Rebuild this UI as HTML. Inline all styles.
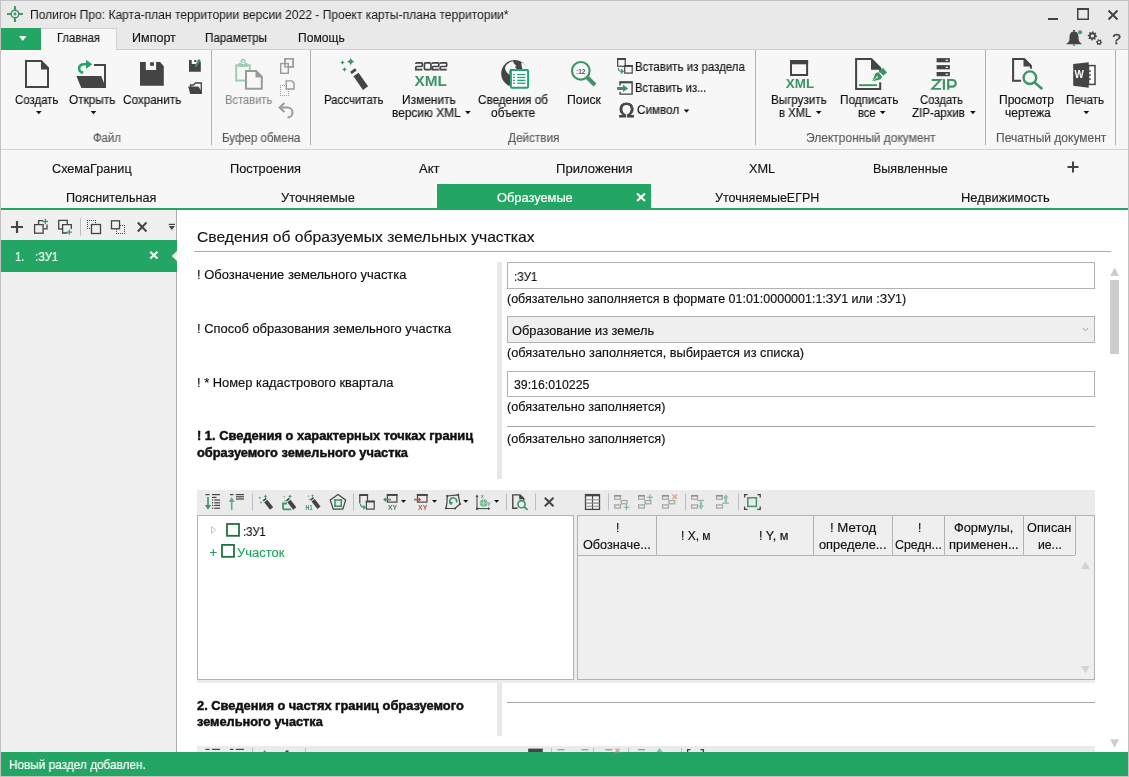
<!DOCTYPE html>
<html><head><meta charset="utf-8"><title>Полигон Про</title>
<style>
html,body{margin:0;padding:0;width:1129px;height:777px;overflow:hidden;background:#fff;}
body{position:relative;font-family:"Liberation Sans",sans-serif;}
.t{position:absolute;white-space:nowrap;transform-origin:0 0;will-change:transform;font-family:"Liberation Sans",sans-serif;}
svg{position:absolute;overflow:visible;}
</style></head><body>
<div style="position:absolute;left:0px;top:0px;width:1129px;height:777px;background:#ffffff;"></div>
<div style="position:absolute;left:0px;top:0px;width:1129px;height:50px;background:#e9e9e9;"></div>
<div style="position:absolute;left:0px;top:50px;width:1129px;height:100px;background:#f7f7f7;"></div>
<div style="position:absolute;left:0px;top:149px;width:1129px;height:1px;background:#d4d4d4;"></div>
<div style="position:absolute;left:0px;top:150px;width:1129px;height:58px;background:#f7f7f7;"></div>
<div style="position:absolute;left:0px;top:208px;width:1129px;height:2px;background:#23a564;"></div>
<div style="position:absolute;left:1px;top:28px;width:40px;height:22px;background:#23a564;"></div>
<div style="position:absolute;left:41px;top:28px;width:76px;height:22px;background:#f7f7f7;border-top:1px solid #d0d0d0;border-right:1px solid #d0d0d0;box-sizing:border-box;"></div>
<div style="position:absolute;left:117px;top:49px;width:1012px;height:1px;background:#d0d0d0;"></div>
<div style="position:absolute;left:1px;top:210px;width:175px;height:542px;background:#f0f0f0;"></div>
<div style="position:absolute;left:176px;top:210px;width:1px;height:542px;background:#abadb5;"></div>
<div style="position:absolute;left:1px;top:240px;width:176px;height:32px;background:#23a564;"></div>
<div style="position:absolute;left:194px;top:251px;width:917px;height:1px;background:#a9abb3;"></div>
<div style="position:absolute;left:497px;top:262px;width:5px;height:217px;background:#e8e8e8;"></div>
<div style="position:absolute;left:507px;top:262px;width:588px;height:27px;background:#fff;border:1px solid #b1b1b9;box-sizing:border-box;"></div>
<div style="position:absolute;left:507px;top:316px;width:588px;height:27px;background:#efefef;border:1px solid #b1b1b9;box-sizing:border-box;"></div>
<div style="position:absolute;left:507px;top:371px;width:588px;height:26px;background:#fff;border:1px solid #b1b1b9;box-sizing:border-box;"></div>
<div style="position:absolute;left:507px;top:426px;width:588px;height:1px;background:#a5a5a5;"></div>
<div style="position:absolute;left:197px;top:490px;width:898px;height:193px;background:#ebebeb;"></div>
<div style="position:absolute;left:197px;top:515px;width:377px;height:165px;background:#fff;border:1px solid #b1b1b9;box-sizing:border-box;"></div>
<div style="position:absolute;left:577px;top:515px;width:518px;height:165px;background:#efefef;border:1px solid #b1b1b9;box-sizing:border-box;"></div>
<div style="position:absolute;left:578px;top:555px;width:497px;height:1px;background:#b1b1b9;"></div>
<div style="position:absolute;left:656px;top:516px;width:1px;height:39px;background:#b1b1b9;"></div>
<div style="position:absolute;left:813px;top:516px;width:1px;height:39px;background:#b1b1b9;"></div>
<div style="position:absolute;left:892px;top:516px;width:1px;height:39px;background:#b1b1b9;"></div>
<div style="position:absolute;left:944px;top:516px;width:1px;height:39px;background:#b1b1b9;"></div>
<div style="position:absolute;left:1023px;top:516px;width:1px;height:39px;background:#b1b1b9;"></div>
<div style="position:absolute;left:1075px;top:516px;width:1px;height:39px;background:#b1b1b9;"></div>
<div style="position:absolute;left:497px;top:683px;width:5px;height:53px;background:#e8e8e8;"></div>
<div style="position:absolute;left:507px;top:702px;width:588px;height:1px;background:#a5a5a5;"></div>
<div style="position:absolute;left:197px;top:746px;width:898px;height:6px;background:#ebebeb;"></div>
<div style="position:absolute;left:0px;top:752px;width:1129px;height:25px;background:#23a564;"></div>
<div style="position:absolute;left:437px;top:184px;width:214px;height:24px;background:#23a564;"></div>
<div style="position:absolute;left:0;top:0;width:1129px;height:777px;box-sizing:border-box;border:1px solid #c2c2c2;"></div>
<span class="t" style="left:29.50px;top:9px;font-size:12.5px;line-height:12.5px;color:#141414;-webkit-text-stroke:0.15px currentColor;transform:scaleX(0.9635);-webkit-text-stroke:0;">Полигон Про: Карта-план территории версии 2022 - Проект карты-плана территории*</span>
<span class="t" style="left:57.10px;top:32px;font-size:12px;line-height:12px;color:#141414;-webkit-text-stroke:0.15px currentColor;transform:scaleX(0.9403);">Главная</span>
<span class="t" style="left:131.60px;top:32px;font-size:12px;line-height:12px;color:#141414;-webkit-text-stroke:0.15px currentColor;transform:scaleX(1.0452);">Импорт</span>
<span class="t" style="left:205.30px;top:32px;font-size:12px;line-height:12px;color:#141414;-webkit-text-stroke:0.15px currentColor;transform:scaleX(0.9688);">Параметры</span>
<span class="t" style="left:298.00px;top:32px;font-size:12px;line-height:12px;color:#141414;-webkit-text-stroke:0.15px currentColor;transform:scaleX(1.0070);">Помощь</span>
<span class="t" style="left:15.40px;top:94px;font-size:12px;line-height:12px;color:#111111;-webkit-text-stroke:0.15px currentColor;transform:scaleX(0.9512);">Создать</span>
<span class="t" style="left:68.50px;top:94px;font-size:12px;line-height:12px;color:#111111;-webkit-text-stroke:0.15px currentColor;transform:scaleX(0.9825);">Открыть</span>
<span class="t" style="left:122.60px;top:94px;font-size:12px;line-height:12px;color:#111111;-webkit-text-stroke:0.15px currentColor;transform:scaleX(0.9744);">Сохранить</span>
<span class="t" style="left:324.00px;top:94px;font-size:12px;line-height:12px;color:#111111;-webkit-text-stroke:0.15px currentColor;transform:scaleX(0.9517);">Рассчитать</span>
<span class="t" style="left:402.20px;top:94px;font-size:12px;line-height:12px;color:#111111;-webkit-text-stroke:0.15px currentColor;transform:scaleX(0.9903);">Изменить</span>
<span class="t" style="left:392.30px;top:107px;font-size:12px;line-height:12px;color:#111111;-webkit-text-stroke:0.15px currentColor;transform:scaleX(0.9892);">версию XML</span>
<span class="t" style="left:477.70px;top:94px;font-size:12px;line-height:12px;color:#111111;-webkit-text-stroke:0.15px currentColor;transform:scaleX(0.9756);">Сведения об</span>
<span class="t" style="left:491.00px;top:107px;font-size:12px;line-height:12px;color:#111111;-webkit-text-stroke:0.15px currentColor;transform:scaleX(0.9877);">объекте</span>
<span class="t" style="left:567.00px;top:94px;font-size:12px;line-height:12px;color:#111111;-webkit-text-stroke:0.15px currentColor;transform:scaleX(1.0217);">Поиск</span>
<span class="t" style="left:634.70px;top:61px;font-size:12px;line-height:12px;color:#111111;-webkit-text-stroke:0.15px currentColor;transform:scaleX(0.9536);">Вставить из раздела</span>
<span class="t" style="left:634.70px;top:82px;font-size:12px;line-height:12px;color:#111111;-webkit-text-stroke:0.15px currentColor;transform:scaleX(0.9336);">Вставить из...</span>
<span class="t" style="left:637.10px;top:104px;font-size:12px;line-height:12px;color:#111111;-webkit-text-stroke:0.15px currentColor;transform:scaleX(0.9780);">Символ</span>
<span class="t" style="left:770.80px;top:94px;font-size:12px;line-height:12px;color:#111111;-webkit-text-stroke:0.15px currentColor;transform:scaleX(0.9687);">Выгрузить</span>
<span class="t" style="left:779.30px;top:107px;font-size:12px;line-height:12px;color:#111111;-webkit-text-stroke:0.15px currentColor;transform:scaleX(0.9396);">в XML</span>
<span class="t" style="left:839.90px;top:94px;font-size:12px;line-height:12px;color:#111111;-webkit-text-stroke:0.15px currentColor;transform:scaleX(0.9802);">Подписать</span>
<span class="t" style="left:857.90px;top:107px;font-size:12px;line-height:12px;color:#111111;-webkit-text-stroke:0.15px currentColor;transform:scaleX(0.9272);">все</span>
<span class="t" style="left:920.00px;top:94px;font-size:12px;line-height:12px;color:#111111;-webkit-text-stroke:0.15px currentColor;transform:scaleX(0.9425);">Создать</span>
<span class="t" style="left:912.20px;top:107px;font-size:12px;line-height:12px;color:#111111;-webkit-text-stroke:0.15px currentColor;transform:scaleX(0.9618);">ZIP-архив</span>
<span class="t" style="left:999.00px;top:94px;font-size:12px;line-height:12px;color:#111111;-webkit-text-stroke:0.15px currentColor;transform:scaleX(1.0046);">Просмотр</span>
<span class="t" style="left:1005.10px;top:107px;font-size:12px;line-height:12px;color:#111111;-webkit-text-stroke:0.15px currentColor;transform:scaleX(0.9957);">чертежа</span>
<span class="t" style="left:1066.30px;top:94px;font-size:12px;line-height:12px;color:#111111;-webkit-text-stroke:0.15px currentColor;transform:scaleX(0.9682);">Печать</span>
<span class="t" style="left:225.10px;top:94px;font-size:12px;line-height:12px;color:#8a8a8a;-webkit-text-stroke:0.15px currentColor;transform:scaleX(0.9297);">Вставить</span>
<span class="t" style="left:92.60px;top:132px;font-size:12px;line-height:12px;color:#5a5a5a;-webkit-text-stroke:0.15px currentColor;transform:scaleX(0.9458);">Файл</span>
<span class="t" style="left:222.00px;top:132px;font-size:12px;line-height:12px;color:#5a5a5a;-webkit-text-stroke:0.15px currentColor;transform:scaleX(0.9617);">Буфер обмена</span>
<span class="t" style="left:507.50px;top:132px;font-size:12px;line-height:12px;color:#5a5a5a;-webkit-text-stroke:0.15px currentColor;transform:scaleX(0.9786);">Действия</span>
<span class="t" style="left:805.50px;top:132px;font-size:12px;line-height:12px;color:#5a5a5a;-webkit-text-stroke:0.15px currentColor;transform:scaleX(0.9962);">Электронный документ</span>
<span class="t" style="left:996.10px;top:132px;font-size:12px;line-height:12px;color:#5a5a5a;-webkit-text-stroke:0.15px currentColor;">Печатный документ</span>
<span class="t" style="left:52.00px;top:163px;font-size:12.5px;line-height:12.5px;color:#141414;-webkit-text-stroke:0.15px currentColor;transform:scaleX(1.0124);">СхемаГраниц</span>
<span class="t" style="left:230.10px;top:163px;font-size:12.5px;line-height:12.5px;color:#141414;-webkit-text-stroke:0.15px currentColor;transform:scaleX(1.0220);">Построения</span>
<span class="t" style="left:418.50px;top:163px;font-size:12.5px;line-height:12.5px;color:#141414;-webkit-text-stroke:0.15px currentColor;transform:scaleX(1.0446);">Акт</span>
<span class="t" style="left:555.80px;top:163px;font-size:12.5px;line-height:12.5px;color:#141414;-webkit-text-stroke:0.15px currentColor;transform:scaleX(1.0462);">Приложения</span>
<span class="t" style="left:749.30px;top:163px;font-size:12.5px;line-height:12.5px;color:#141414;-webkit-text-stroke:0.15px currentColor;transform:scaleX(1.0175);">XML</span>
<span class="t" style="left:873.00px;top:163px;font-size:12.5px;line-height:12.5px;color:#141414;-webkit-text-stroke:0.15px currentColor;transform:scaleX(1.0030);">Выявленные</span>
<span class="t" style="left:66.10px;top:192px;font-size:12.5px;line-height:12.5px;color:#141414;-webkit-text-stroke:0.15px currentColor;transform:scaleX(1.0103);">Пояснительная</span>
<span class="t" style="left:280.80px;top:192px;font-size:12.5px;line-height:12.5px;color:#141414;-webkit-text-stroke:0.15px currentColor;transform:scaleX(1.0282);">Уточняемые</span>
<span class="t" style="left:715.40px;top:192px;font-size:12.5px;line-height:12.5px;color:#141414;-webkit-text-stroke:0.15px currentColor;">УточняемыеЕГРН</span>
<span class="t" style="left:960.90px;top:192px;font-size:12.5px;line-height:12.5px;color:#141414;-webkit-text-stroke:0.15px currentColor;transform:scaleX(1.0314);">Недвижимость</span>
<span class="t" style="left:496.80px;top:192px;font-size:12.5px;line-height:12.5px;color:#ffffff;-webkit-text-stroke:0.15px currentColor;transform:scaleX(1.0261);-webkit-text-stroke:0.2px #fff;">Образуемые</span>
<span class="t" style="left:15.30px;top:251px;font-size:12.5px;line-height:12.5px;color:#ffffff;-webkit-text-stroke:0.15px currentColor;transform:scaleX(0.8675);-webkit-text-stroke:0.2px #fff;">1.</span>
<span class="t" style="left:34.60px;top:251px;font-size:12.5px;line-height:12.5px;color:#ffffff;-webkit-text-stroke:0.15px currentColor;transform:scaleX(0.8971);-webkit-text-stroke:0.2px #fff;">:ЗУ1</span>
<span class="t" style="left:196.90px;top:229px;font-size:15px;line-height:15px;color:#141414;-webkit-text-stroke:0.15px currentColor;transform:scaleX(1.0429);">Сведения об образуемых земельных участках</span>
<span class="t" style="left:197.20px;top:269px;font-size:12px;line-height:12px;color:#111111;-webkit-text-stroke:0.15px currentColor;transform:scaleX(1.0792);">! Обозначение земельного участка</span>
<span class="t" style="left:197.20px;top:323px;font-size:12px;line-height:12px;color:#111111;-webkit-text-stroke:0.15px currentColor;transform:scaleX(1.0758);">! Способ образования земельного участка</span>
<span class="t" style="left:197.20px;top:377px;font-size:12px;line-height:12px;color:#111111;-webkit-text-stroke:0.15px currentColor;transform:scaleX(1.0738);">! * Номер кадастрового квартала</span>
<span class="t" style="left:197.20px;top:430px;font-size:12px;line-height:12px;color:#111;font-weight:bold;-webkit-text-stroke:0.45px currentColor;transform:scaleX(1.0733);">! 1. Сведения о характерных точках границ</span>
<span class="t" style="left:197.20px;top:447px;font-size:12px;line-height:12px;color:#111;font-weight:bold;-webkit-text-stroke:0.45px currentColor;transform:scaleX(1.0675);">образуемого земельного участка</span>
<span class="t" style="left:513.60px;top:271px;font-size:12px;line-height:12px;color:#111111;-webkit-text-stroke:0.15px currentColor;transform:scaleX(0.9374);">:ЗУ1</span>
<span class="t" style="left:506.80px;top:293px;font-size:12px;line-height:12px;color:#111111;-webkit-text-stroke:0.15px currentColor;transform:scaleX(1.0409);">(обязательно заполняется в формате 01:01:0000001:1:ЗУ1 или :ЗУ1)</span>
<span class="t" style="left:511.80px;top:325px;font-size:12px;line-height:12px;color:#111111;-webkit-text-stroke:0.15px currentColor;transform:scaleX(1.0682);">Образование из земель</span>
<span class="t" style="left:507.10px;top:347px;font-size:12px;line-height:12px;color:#111111;-webkit-text-stroke:0.15px currentColor;transform:scaleX(1.0626);">(обязательно заполняется, выбирается из списка)</span>
<span class="t" style="left:513.90px;top:379px;font-size:12px;line-height:12px;color:#111111;-webkit-text-stroke:0.15px currentColor;transform:scaleX(1.0262);">39:16:010225</span>
<span class="t" style="left:507.10px;top:401px;font-size:12px;line-height:12px;color:#111111;-webkit-text-stroke:0.15px currentColor;transform:scaleX(1.0518);">(обязательно заполняется)</span>
<span class="t" style="left:507.10px;top:433px;font-size:12px;line-height:12px;color:#111111;-webkit-text-stroke:0.15px currentColor;transform:scaleX(1.0518);">(обязательно заполняется)</span>
<span class="t" style="left:615.70px;top:522px;font-size:12px;line-height:12px;color:#111111;-webkit-text-stroke:0.15px currentColor;">!</span>
<span class="t" style="left:582.70px;top:539px;font-size:12px;line-height:12px;color:#111111;-webkit-text-stroke:0.15px currentColor;transform:scaleX(1.0553);">Обозначе...</span>
<span class="t" style="left:681.10px;top:530px;font-size:12px;line-height:12px;color:#111111;-webkit-text-stroke:0.15px currentColor;transform:scaleX(0.9958);">! X, м</span>
<span class="t" style="left:758.90px;top:530px;font-size:12px;line-height:12px;color:#111111;-webkit-text-stroke:0.15px currentColor;transform:scaleX(1.0583);">! Y, м</span>
<span class="t" style="left:829.50px;top:522px;font-size:12px;line-height:12px;color:#111111;-webkit-text-stroke:0.15px currentColor;transform:scaleX(1.1057);">! Метод</span>
<span class="t" style="left:819.10px;top:539px;font-size:12px;line-height:12px;color:#111111;-webkit-text-stroke:0.15px currentColor;transform:scaleX(1.0672);">определе...</span>
<span class="t" style="left:917.50px;top:522px;font-size:12px;line-height:12px;color:#111111;-webkit-text-stroke:0.15px currentColor;">!</span>
<span class="t" style="left:894.50px;top:539px;font-size:12px;line-height:12px;color:#111111;-webkit-text-stroke:0.15px currentColor;transform:scaleX(1.0336);">Средн...</span>
<span class="t" style="left:954.20px;top:522px;font-size:12px;line-height:12px;color:#111111;-webkit-text-stroke:0.15px currentColor;transform:scaleX(1.0667);">Формулы,</span>
<span class="t" style="left:948.90px;top:539px;font-size:12px;line-height:12px;color:#111111;-webkit-text-stroke:0.15px currentColor;transform:scaleX(1.0764);">применен...</span>
<span class="t" style="left:1026.80px;top:522px;font-size:12px;line-height:12px;color:#111111;-webkit-text-stroke:0.15px currentColor;transform:scaleX(1.0603);">Описан</span>
<span class="t" style="left:1037.50px;top:539px;font-size:12px;line-height:12px;color:#111111;-webkit-text-stroke:0.15px currentColor;transform:scaleX(1.0182);">ие...</span>
<span class="t" style="left:242.90px;top:526px;font-size:12px;line-height:12px;color:#111111;-webkit-text-stroke:0.15px currentColor;transform:scaleX(0.9131);">:ЗУ1</span>
<span class="t" style="left:237.40px;top:547px;font-size:12px;line-height:12px;color:#26a562;-webkit-text-stroke:0.15px currentColor;transform:scaleX(1.0795);">Участок</span>
<span class="t" style="left:196.70px;top:700px;font-size:12px;line-height:12px;color:#111;font-weight:bold;-webkit-text-stroke:0.45px currentColor;transform:scaleX(1.0705);">2. Сведения о частях границ образуемого</span>
<span class="t" style="left:196.70px;top:716px;font-size:12px;line-height:12px;color:#111;font-weight:bold;-webkit-text-stroke:0.45px currentColor;transform:scaleX(1.0613);">земельного участка</span>
<span class="t" style="left:8.80px;top:759px;font-size:12.5px;line-height:12.5px;color:#ffffff;-webkit-text-stroke:0.15px currentColor;transform:scaleX(0.9443);-webkit-text-stroke:0.2px #fff;">Новый раздел добавлен.</span>
<svg width="1129" height="777" viewBox="0 0 1129 777" style="left:0;top:0;"><g fill="none" stroke="#3d9466" stroke-width="1.4"><circle cx="15" cy="14" r="3.8"/></g><g fill="#3d9466"><rect x="14.05" y="6" width="1.9" height="4.4"/><rect x="14.05" y="17.6" width="1.9" height="4.4"/><rect x="7" y="13.05" width="4.4" height="1.9"/><rect x="18.6" y="13.05" width="4.4" height="1.9"/><circle cx="15" cy="14" r="1.4"/></g><rect x="1048" y="18" width="10" height="2" fill="#444444"/><rect x="1077.75" y="8.75" width="10.5" height="10.5" fill="none" stroke="#444444" stroke-width="1.5"/><rect x="1077" y="8" width="12" height="2" fill="#444444"/><path d="M1108.5,10.5 L1117.5,19.5 M1117.5,10.5 L1108.5,19.5" stroke="#444444" stroke-width="2"/><path d="M1074,31.5 C1070,31.5 1069.5,35 1069.5,38.5 C1069.5,41 1068.5,42.5 1066.6,43.6 L1066.6,44.3 H1081.6 L1081.6,43.6 C1079.7,42.5 1078.6,41 1078.6,38.5 C1078.6,35 1078,31.5 1074,31.5Z" fill="#444444"/><rect x="1073.2" y="44.6" width="1.8" height="1.1" fill="#444444"/><rect x="1073" y="30" width="2" height="1.6" fill="#444444"/><circle cx="1080" cy="32.3" r="2.1" fill="#3fa374"/><polygon points="1097.10,35.90 1097.01,36.82 1095.53,37.20 1095.21,37.78 1095.72,39.22 1095.01,39.81 1093.70,39.03 1093.06,39.22 1092.40,40.60 1091.48,40.51 1091.10,39.03 1090.52,38.71 1089.08,39.22 1088.49,38.51 1089.27,37.20 1089.08,36.56 1087.70,35.90 1087.79,34.98 1089.27,34.60 1089.59,34.02 1089.08,32.58 1089.79,31.99 1091.10,32.77 1091.74,32.58 1092.40,31.20 1093.32,31.29 1093.70,32.77 1094.28,33.09 1095.72,32.58 1096.31,33.29 1095.53,34.60 1095.72,35.24" fill="#444444"/><circle cx="1092.4" cy="35.9" r="1.69" fill="#e9e9e9"/><polygon points="1102.20,42.20 1102.09,43.00 1101.03,43.32 1100.68,43.78 1100.65,44.88 1099.90,45.19 1099.10,44.43 1098.52,44.36 1097.55,44.88 1096.91,44.39 1097.17,43.32 1096.94,42.78 1096.00,42.20 1096.11,41.40 1097.17,41.08 1097.52,40.62 1097.55,39.52 1098.30,39.21 1099.10,39.97 1099.68,40.04 1100.65,39.52 1101.29,40.01 1101.03,41.08 1101.26,41.62" fill="#444444"/><circle cx="1099.1" cy="42.2" r="1.12" fill="#e9e9e9"/><text x="1112.2" y="43.9" font-family="Liberation Sans" font-size="15.5" fill="#444444" stroke="#444444" stroke-width="0.4">?</text><path d="M19,36 H26.5 L22.75,41Z" fill="#fff"/><path fill-rule="evenodd" fill="#444444" d="M25,60 H41.5 L49,67.5 V88 H25Z M27,62 H41 V69.5 H47 V86 H27Z"/><path d="M36.0,111 H41.599999999999994 L38.8,114.3Z" fill="#111"/><path fill="#444444" d="M94,64 H106 V88 H81.3 L76.4,76 H101.2 L104,83 V66 H94Z"/><path d="M83.2,72.8 C77.5,71.5 77.8,64.3 84.2,64.3 H87.5" fill="none" stroke="#23a564" stroke-width="2.6"/><path d="M86,59.7 L92.3,64.3 L86,68.9Z" fill="#23a564"/><path d="M90.7,111 H96.3 L93.5,114.3Z" fill="#111"/><path fill="#444444" d="M140,62 H145.8 V70.1 H156.1 V62 H160.1 L163.8,66.2 V85.8 H140Z"/><rect x="150.1" y="62.3" width="3.8" height="3.5" fill="#444444"/><path fill="#444444" d="M189,60 H191.7 V64 H197.6 V60 H199 L200.8,62 V71.8 H189Z"/><rect x="194.3" y="60" width="2" height="2" fill="#444444"/><path d="M199.8,59.5 L195.4,66.6" stroke="#3d9466" stroke-width="2.2"/><path fill="none" stroke="#444444" stroke-width="1.3" d="M190.5,93 V85 H193.5 L195.5,83 H201.3 V93"/><path fill="#444444" d="M188.2,86.5 H198.5 L202,92 V94 H190.3Z"/><path fill="none" stroke="#9fcdb3" stroke-width="2" d="M236.2,65.2 H249.8 V80.6 H236.2Z"/><path fill="#9fcdb3" fill-rule="evenodd" d="M238.5,63 H247.5 V67 H238.5Z M243.1,58.8 A2.6,2.6 0 1 1 243.09,58.8Z"/><circle cx="243.1" cy="61.6" r="1.1" fill="#f7f7f7"/><path fill="#f7f7f7" d="M245,70 H256 L263,77 V89.7 H245Z"/><path fill-rule="evenodd" fill="#9a9a9a" d="M245,70 H256.5 L262.8,76.3 V89.7 H245Z M247,72 H255.5 V77.5 H260.8 V87.7 H247Z"/><rect x="284.9" y="58.7" width="8.2" height="8.2" fill="#f7f7f7" stroke="#9a9a9a" stroke-width="1.4"/><rect x="280.7" y="63.6" width="7.6" height="9.7" fill="#f7f7f7" stroke="#9a9a9a" stroke-width="1.4"/><rect x="284.9" y="58.7" width="8.2" height="8.2" fill="none" stroke="#9a9a9a" stroke-width="1.4"/><g><rect x="280" y="85" width="1" height="1" fill="#9a9a9a"/><rect x="280" y="87" width="1" height="1" fill="#9a9a9a"/><rect x="280" y="89" width="1" height="1" fill="#9a9a9a"/><rect x="280" y="91" width="1" height="1" fill="#9a9a9a"/><rect x="280" y="93" width="1" height="1" fill="#9a9a9a"/><rect x="280" y="95" width="1" height="1" fill="#9a9a9a"/><rect x="282" y="85" width="1" height="1" fill="#9a9a9a"/><rect x="282" y="95" width="1" height="1" fill="#9a9a9a"/><rect x="284" y="85" width="1" height="1" fill="#9a9a9a"/><rect x="284" y="95" width="1" height="1" fill="#9a9a9a"/><rect x="286" y="85" width="1" height="1" fill="#9a9a9a"/><rect x="286" y="95" width="1" height="1" fill="#9a9a9a"/><rect x="288" y="85" width="1" height="1" fill="#9a9a9a"/><rect x="288" y="87" width="1" height="1" fill="#9a9a9a"/><rect x="288" y="89" width="1" height="1" fill="#9a9a9a"/><rect x="288" y="91" width="1" height="1" fill="#9a9a9a"/><rect x="288" y="93" width="1" height="1" fill="#9a9a9a"/><rect x="288" y="95" width="1" height="1" fill="#9a9a9a"/></g><path d="M286.2,80.9 H292 L294,83 V89 H286.2Z" fill="#f7f7f7" stroke="#9a9a9a" stroke-width="1.4"/><path d="M281.5,107.5 H287.5 A5,5 0 0 1 287.5,117.5" fill="none" stroke="#9a9a9a" stroke-width="2"/><path d="M284.5,103 L279.6,107.5 L284.5,112" fill="none" stroke="#9a9a9a" stroke-width="2"/><path d="M350.7,58.1 Q351.312,61.088 354.3,61.7 Q351.312,62.312000000000005 350.7,65.3 Q350.08799999999997,62.312000000000005 347.09999999999997,61.7 Q350.08799999999997,61.088 350.7,58.1Z" fill="#3d9466"/><path d="M342.5,60.2 Q342.891,62.109 344.8,62.5 Q342.891,62.891 342.5,64.8 Q342.109,62.891 340.2,62.5 Q342.109,62.109 342.5,60.2Z" fill="#3d9466"/><path d="M344.5,67.10000000000001 Q344.891,69.009 346.8,69.4 Q344.891,69.79100000000001 344.5,71.7 Q344.109,69.79100000000001 342.2,69.4 Q344.109,69.009 344.5,67.10000000000001Z" fill="#3d9466"/><g transform="translate(360.75,81.3) rotate(55)"><rect x="-8.3" y="-3.1" width="16.6" height="6.2" fill="#444444"/></g><g transform="translate(353.4,71.1) rotate(55)"><rect x="-1.35" y="-3" width="2.7" height="6" fill="#444444"/></g><path d="M415.8,63.9 Q415.8,62.9 416.8,62.9 H421.8 Q422.3,62.9 422.3,63.9 V65.5 Q422.3,66.5 421.3,66.5 H416.8 Q415.8,66.5 415.8,67.5 V69.7 H422.40000000000003" fill="none" stroke="#444444" stroke-width="1.7"/><rect x="424.4" y="62.9" width="6.5" height="6.8" rx="1.2" fill="none" stroke="#444444" stroke-width="1.7"/><path d="M432.3,63.9 Q432.3,62.9 433.3,62.9 H438.3 Q438.8,62.9 438.8,63.9 V65.5 Q438.8,66.5 437.8,66.5 H433.3 Q432.3,66.5 432.3,67.5 V69.7 H438.90000000000003" fill="none" stroke="#444444" stroke-width="1.7"/><path d="M440.2,63.9 Q440.2,62.9 441.2,62.9 H446.2 Q446.7,62.9 446.7,63.9 V65.5 Q446.7,66.5 445.7,66.5 H441.2 Q440.2,66.5 440.2,67.5 V69.7 H446.8" fill="none" stroke="#444444" stroke-width="1.7"/><text x="414.6" y="85.9" font-family="Liberation Sans" font-weight="bold" font-size="14.5" fill="#3d9466" textLength="32.4" lengthAdjust="spacingAndGlyphs">XML</text><path d="M465.09999999999997,111 H470.7 L467.9,114.3Z" fill="#111"/><circle cx="514.6" cy="73.5" r="13.4" fill="#444444"/><path fill="#f7f7f7" d="M505,67.5 C506.5,64 509.5,62 513,61.3 L514.2,63.8 L516.3,65.8 L515,67.2 L516.8,69 H510.2 C509.2,71 509.2,73 509.8,75 C507,73 505,70.5 505,67.5Z"/><path fill="#f7f7f7" d="M521.3,62.4 C524.5,63.6 526.6,66 527.6,69 H522.4 C521.8,67 521.3,64.5 521.3,62.4Z"/><rect x="510.9" y="70" width="17.2" height="17.7" rx="1.3" fill="#fff" stroke="#23a37a" stroke-width="2"/><g fill="#23a37a"><rect x="513" y="73.9" width="2" height="1.3"/><rect x="517.2" y="73.9" width="8.3" height="1.3"/><rect x="513" y="76.8" width="2" height="1.3"/><rect x="517.2" y="76.8" width="8.3" height="1.3"/><rect x="513" y="79.7" width="2" height="1.3"/><rect x="517.2" y="79.7" width="8.3" height="1.3"/><rect x="513" y="82.6" width="2" height="1.3"/><rect x="517.2" y="82.6" width="8.3" height="1.3"/></g><circle cx="580.8" cy="70.8" r="8.8" fill="none" stroke="#3d9466" stroke-width="2.1"/><path d="M587.3,77.5 L595,85" stroke="#3d9466" stroke-width="4"/><text x="576" y="73.6" font-family="Liberation Sans" font-weight="bold" font-size="8" fill="#555" textLength="9.4" lengthAdjust="spacingAndGlyphs">:12</text><rect x="617.7" y="58.7" width="7.5" height="7.6" fill="none" stroke="#444444" stroke-width="1.2"/><rect x="617.1" y="58.1" width="8.7" height="1.9" fill="#444444"/><rect x="624.7" y="65.6" width="7.5" height="7.5" fill="#f7f7f7" stroke="#444444" stroke-width="1.2"/><rect x="624.1" y="65" width="8.7" height="1.9" fill="#444444"/><path d="M618.5,67.8 C618,70.5 619.5,71.4 622,71.4" fill="none" stroke="#3d9466" stroke-width="1.3"/><path d="M620.8,69.2 L623.2,71.4 L620.8,73.6" fill="none" stroke="#3d9466" stroke-width="1.3"/><rect x="619.2" y="81.2" width="13.6" height="2.1" fill="#444444"/><path d="M620,84.5 V85 M620,91.8 V94.1 H632.1 V83 M620,83 V85.5" fill="none" stroke="#444444" stroke-width="1.4"/><path fill="#3d9466" d="M617.1,86.9 H623 V84.7 L628.2,88.4 L623,92.1 V89.9 H617.1Z"/><text x="618.8" y="116.8" font-family="Liberation Sans" font-size="20" fill="#444444" stroke="#444444" stroke-width="0.9" textLength="15.6" lengthAdjust="spacingAndGlyphs">Ω</text><path d="M683.7,109.5 H689.3 L686.5,112.8Z" fill="#111"/><rect x="791" y="61" width="16.1" height="14" fill="none" stroke="#444444" stroke-width="2"/><rect x="790" y="60" width="18.1" height="4.3" fill="#444444"/><text x="785.8" y="88.1" font-family="Liberation Sans" font-weight="bold" font-size="13.5" fill="#3d9466" textLength="28.4" lengthAdjust="spacingAndGlyphs">XML</text><path d="M815.9000000000001,111 H821.5 L818.7,114.3Z" fill="#111"/><path fill-rule="evenodd" fill="#444444" d="M855.1,58.1 H871.5 L881.2,67.8 V72.5 H879.2 V69.8 H871 V60.1 H857.1 V87.9 H879.2 V82.3 H881.2 V89.9 H855.1Z"/><path d="M871.5,58.1 L881.2,67.8 H871.5Z" fill="#444444"/><rect x="859" y="84.2" width="18" height="1.9" fill="#3d9466"/><g transform="translate(872.4,81.3) rotate(-41.5)"><path fill="#3d9466" d="M0,0 L7,-3.8 Q10.5,-3.8 10.5,-2.5 V2.5 Q10.5,3.8 7,3.8 Z"/><rect x="11.8" y="-3.1" width="5" height="6.2" fill="#3d9466"/><circle cx="6.2" cy="0" r="0.9" fill="#f7f7f7"/><path d="M1.5,0 H5.5" stroke="#f7f7f7" stroke-width="0.6"/></g><path d="M879.9000000000001,111 H885.5 L882.7,114.3Z" fill="#111"/><rect x="936.6" y="58.1" width="13.3" height="4.2" fill="#444444"/><rect x="945.6" y="59.7" width="2.4" height="1.2" fill="#f0f0f0"/><rect x="936.6" y="65.1" width="13.3" height="4.2" fill="#444444"/><rect x="945.6" y="66.69999999999999" width="2.4" height="1.2" fill="#f0f0f0"/><rect x="936.6" y="72" width="13.3" height="4.2" fill="#444444"/><rect x="945.6" y="73.6" width="2.4" height="1.2" fill="#f0f0f0"/><path d="M931.7,80 H940.5 L932.2,88.9 H941" fill="none" stroke="#3d9466" stroke-width="1.9"/><rect x="942.8" y="79.1" width="2.2" height="10.7" fill="#3d9466"/><path d="M948.2,89.8 V80 H952.5 A3.3,3.3 0 0 1 952.5,86.6 H948.2" fill="none" stroke="#3d9466" stroke-width="2.2"/><path d="M970.1,111 H975.6999999999999 L972.9,114.3Z" fill="#111"/><path fill="#444444" d="M1012.1,58.1 H1024.5 L1031.9,65.6 V68.7 H1029.9 V66.6 H1023.5 V60.1 H1014.1 V79.8 H1021.1 V81.8 H1012.1Z"/><path fill="#444444" d="M1024.5,58.1 L1031.9,65.6 H1024.5Z"/><circle cx="1029.9" cy="77.7" r="6.3" fill="none" stroke="#3d9466" stroke-width="2.4"/><path d="M1034.6,82.6 L1042.3,89.1" stroke="#3d9466" stroke-width="2.6"/><rect x="1088.5" y="65.6" width="6.5" height="18.8" fill="#fff" stroke="#444444" stroke-width="1.5"/><g fill="#444444"><rect x="1088.5" y="70.4" width="2.4" height="1.4"/><rect x="1088.5" y="74.4" width="2.4" height="1.4"/><rect x="1088.5" y="78.4" width="2.4" height="1.4"/></g><path fill="#444444" d="M1073.2,64.1 L1088.7,62.3 V87.7 L1073.2,85.7Z"/><text x="1074.6" y="77.9" font-family="Liberation Sans" font-weight="bold" font-size="11" fill="#fff" textLength="9.3" lengthAdjust="spacingAndGlyphs">W</text><path d="M1083.5,111 H1089.1 L1086.3,114.3Z" fill="#111"/><rect x="211" y="50" width="1" height="95" fill="#adb0b8"/><rect x="310" y="50" width="1" height="95" fill="#adb0b8"/><rect x="755" y="50" width="1" height="95" fill="#adb0b8"/><rect x="985" y="50" width="1" height="95" fill="#adb0b8"/><rect x="1115" y="50" width="1" height="95" fill="#adb0b8"/><path d="M1073,161.5 V172.5 M1067.5,167 H1078.5" stroke="#444444" stroke-width="2"/><path d="M637,193.5 L645,201 M645,193.5 L637,201" stroke="#fff" stroke-width="2.2"/><path d="M17,221 V233 M11,227 H23" stroke="#444444" stroke-width="2.2"/><path d="M38.6,224.5 V220.6 H43 M47,224.5 V228.8 H43" fill="none" stroke="#444444" stroke-width="1.3"/><rect x="34.6" y="224.6" width="8.5" height="8.6" fill="#f0f0f0" stroke="#444444" stroke-width="1.3"/><path d="M45.3,218.8 V224.2 M42.6,221.5 H48" stroke="#3d9466" stroke-width="1.3"/><rect x="58.7" y="220.4" width="8.6" height="8.6" fill="none" stroke="#444444" stroke-width="1.3"/><rect x="63" y="225" width="8" height="8" fill="#f0f0f0"/><path d="M71.3,229 V224.6 H62.6 V233 H67.5" fill="none" stroke="#444444" stroke-width="1.3"/><path d="M69.3,229.5 V234.8 M66.6,232.1 H72" stroke="#3d9466" stroke-width="1.3"/><rect x="80" y="218" width="1" height="17.5" fill="#b9c0ca"/><g><rect x="87" y="220" width="1" height="1" fill="#444"/><rect x="87" y="222" width="1" height="1" fill="#444"/><rect x="87" y="224" width="1" height="1" fill="#444"/><rect x="87" y="226" width="1" height="1" fill="#444"/><rect x="87" y="228" width="1" height="1" fill="#444"/><rect x="89" y="220" width="1" height="1" fill="#444"/><rect x="89" y="228" width="1" height="1" fill="#444"/><rect x="91" y="220" width="1" height="1" fill="#444"/><rect x="91" y="228" width="1" height="1" fill="#444"/><rect x="93" y="220" width="1" height="1" fill="#444"/><rect x="93" y="228" width="1" height="1" fill="#444"/><rect x="95" y="220" width="1" height="1" fill="#444"/><rect x="95" y="222" width="1" height="1" fill="#444"/><rect x="95" y="224" width="1" height="1" fill="#444"/><rect x="95" y="226" width="1" height="1" fill="#444"/><rect x="95" y="228" width="1" height="1" fill="#444"/></g><rect x="91.5" y="224.5" width="9" height="9" fill="#f0f0f0" stroke="#444444" stroke-width="1.3"/><rect x="111.5" y="220.8" width="8" height="8" fill="#f0f0f0" stroke="#444444" stroke-width="1.3"/><g><rect x="116" y="229" width="1" height="1" fill="#444"/><rect x="116" y="231" width="1" height="1" fill="#444"/><rect x="116" y="233" width="1" height="1" fill="#444"/><rect x="118" y="233" width="1" height="1" fill="#444"/><rect x="120" y="225" width="1" height="1" fill="#444"/><rect x="120" y="233" width="1" height="1" fill="#444"/><rect x="122" y="225" width="1" height="1" fill="#444"/><rect x="122" y="233" width="1" height="1" fill="#444"/><rect x="124" y="225" width="1" height="1" fill="#444"/><rect x="124" y="227" width="1" height="1" fill="#444"/><rect x="124" y="229" width="1" height="1" fill="#444"/><rect x="124" y="231" width="1" height="1" fill="#444"/><rect x="124" y="233" width="1" height="1" fill="#444"/></g><path d="M137.8,222.5 L146.5,231.5 M146.5,222.5 L137.8,231.5" stroke="#444444" stroke-width="2"/><rect x="168.7" y="223.8" width="6.3" height="1.2" fill="#444444"/><path d="M168.7,226 H175 L171.85,230Z" fill="#444444"/><path d="M150.3,251.8 L157.5,258.6 M157.5,251.8 L150.3,258.6" stroke="#fff" stroke-width="2"/><path d="M177,251 L171.8,256 L177,261Z" fill="#fff"/><path d="M1110.2,276 L1114.6,267.3 L1119,276Z" fill="#cdcdcd"/><rect x="1110" y="280" width="9" height="74" fill="#cdcdcd"/><path d="M1110.2,739.2 L1114.6,747.8 L1119,739.2Z" fill="#cdcdcd"/><path d="M1082.8,328 L1085.5,330.8 L1088.2,328" fill="none" stroke="#a0a0a0" stroke-width="1"/><g fill="#444444"><rect x="205.5" y="494" width="4" height="1.2"/><rect x="212" y="494" width="8" height="1.2"/><rect x="212" y="496.8" width="4.5" height="1.2"/><rect x="212" y="499.4" width="1.2" height="1.2"/><rect x="214.2" y="499.4" width="5.8" height="1.2"/><rect x="212" y="502.2" width="1.2" height="1.2"/><rect x="214.2" y="502.2" width="5.8" height="1.2"/><rect x="212" y="504.8" width="1.2" height="1.2"/><rect x="214.2" y="504.8" width="5.8" height="1.2"/><rect x="212" y="507.6" width="1.2" height="1.2"/><rect x="214.2" y="507.6" width="5.8" height="1.2"/></g><path d="M208,497 V506" stroke="#3d9466" stroke-width="1.6"/><path d="M204.9,505 H211.1 L208,509.8Z" fill="#3d9466"/><g fill="#444444"><rect x="230" y="494" width="3.5" height="1.2"/><rect x="235.9" y="494" width="8" height="1.2"/><rect x="235.9" y="496.2" width="8" height="1.2"/><rect x="235.9" y="498.4" width="8" height="1.2"/></g><path d="M231.7,501 V510" stroke="#5fae84" stroke-width="1.6"/><path d="M228.8,502 H234.6 L231.7,497Z" fill="#5fae84"/><rect x="252" y="493.3" width="1" height="17.30000000000001" fill="#b9c0ca"/><rect x="353" y="493.3" width="1" height="17.30000000000001" fill="#b9c0ca"/><rect x="506" y="493.3" width="1" height="17.30000000000001" fill="#b9c0ca"/><rect x="535" y="493.3" width="1" height="17.30000000000001" fill="#b9c0ca"/><rect x="608" y="493.3" width="1" height="17.30000000000001" fill="#b9c0ca"/><rect x="685" y="493.3" width="1" height="17.30000000000001" fill="#b9c0ca"/><rect x="738" y="493.3" width="1" height="17.30000000000001" fill="#b9c0ca"/><path d="M265.5,494.40000000000003 Q265.823,495.97700000000003 267.4,496.3 Q265.823,496.623 265.5,498.2 Q265.177,496.623 263.6,496.3 Q265.177,495.97700000000003 265.5,494.40000000000003Z" fill="#3d9466"/><path d="M259.8,496.40000000000003 Q260.038,497.562 261.2,497.8 Q260.038,498.038 259.8,499.2 Q259.562,498.038 258.40000000000003,497.8 Q259.562,497.562 259.8,496.40000000000003Z" fill="#3d9466"/><path d="M261,500.90000000000003 Q261.238,502.062 262.4,502.3 Q261.238,502.538 261,503.7 Q260.762,502.538 259.6,502.3 Q260.762,502.062 261,500.90000000000003Z" fill="#3d9466"/><g transform="translate(268.8,505) rotate(52)"><rect x="-5" y="-2" width="9.5" height="4" fill="#444444"/><rect x="-7.5" y="-2" width="1.6" height="4" fill="#444444"/></g><path d="M290,494.40000000000003 Q290.323,495.97700000000003 291.9,496.3 Q290.323,496.623 290,498.2 Q289.677,496.623 288.1,496.3 Q289.677,495.97700000000003 290,494.40000000000003Z" fill="#3d9466"/><path d="M284.2,495.5 Q284.421,496.579 285.5,496.8 Q284.421,497.021 284.2,498.1 Q283.979,497.021 282.9,496.8 Q283.979,496.579 284.2,495.5Z" fill="#7fbf9a"/><path d="M285,499.7 Q285.221,500.779 286.3,501 Q285.221,501.221 285,502.3 Q284.779,501.221 283.7,501 Q284.779,500.779 285,499.7Z" fill="#7fbf9a"/><path d="M283,509.3 V503.5 H287 M283,509.3 H291" fill="none" stroke="#3d9466" stroke-width="1.8"/><g transform="translate(292,505) rotate(52)"><rect x="-5" y="-2" width="9.5" height="4" fill="#444444"/><rect x="-7.5" y="-2" width="1.6" height="4" fill="#444444"/></g><path d="M312.5,494.3 Q312.755,495.545 314.0,495.8 Q312.755,496.055 312.5,497.3 Q312.245,496.055 311.0,495.8 Q312.245,495.545 312.5,494.3Z" fill="#3d9466"/><path d="M308.5,495.1 Q308.704,496.096 309.7,496.3 Q308.704,496.504 308.5,497.5 Q308.296,496.504 307.3,496.3 Q308.296,496.096 308.5,495.1Z" fill="#7fbf9a"/><path d="M309.5,498.3 Q309.704,499.296 310.7,499.5 Q309.704,499.704 309.5,500.7 Q309.296,499.704 308.3,499.5 Q309.296,499.296 309.5,498.3Z" fill="#7fbf9a"/><text x="305.6" y="509.6" font-family="Liberation Sans" font-weight="bold" font-size="6.5" fill="#3d9466" textLength="7" lengthAdjust="spacingAndGlyphs">H1</text><g transform="translate(316.2,504.2) rotate(52)"><rect x="-5" y="-2" width="9.5" height="4" fill="#444444"/><rect x="-7.5" y="-2" width="1.6" height="4" fill="#444444"/></g><path d="M338,494.5 L345.7,500 L342.8,509.2 H333.2 L330.3,500Z" fill="none" stroke="#444444" stroke-width="1.2"/><rect x="335" y="500" width="6.2" height="6.2" fill="none" stroke="#3d9466" stroke-width="1.5"/><g fill="#3d9466"><circle cx="335" cy="500" r="1"/><circle cx="341.2" cy="500" r="1"/><circle cx="335" cy="506.2" r="1"/><circle cx="341.2" cy="506.2" r="1"/></g><path d="M359.8,503.5 V494.9 H367.5 V500.5" fill="none" stroke="#444444" stroke-width="1.2"/><rect x="359.2" y="494.2" width="8.9" height="1.8" fill="#444444"/><rect x="366.4" y="501.3" width="7.8" height="7.8" fill="none" stroke="#444444" stroke-width="1.2"/><rect x="365.8" y="500.7" width="9" height="1.8" fill="#444444"/><path d="M360.5,504 C360.5,506.5 362,507.3 364.5,507.3" fill="none" stroke="#3d9466" stroke-width="1.2"/><path d="M363.3,505.5 L365.2,507.3 L363.3,509" fill="none" stroke="#3d9466" stroke-width="1.1"/><rect x="387.4" y="494.6" width="9.5" height="7.5" fill="none" stroke="#444444" stroke-width="1.2"/><rect x="386.79999999999995" y="494" width="10.7" height="1.9" fill="#444444"/><rect x="383.9" y="498.8" width="7" height="1.6" fill="#3d9466"/><path d="M383.2,499.6 L385.9,497.2 V502Z" fill="#3d9466"/><text x="388.0" y="509.6" font-family="Liberation Sans" font-weight="bold" font-size="6.5" fill="#3d9466" textLength="9.2" lengthAdjust="spacingAndGlyphs">XY</text><path d="M401.0,500 H406.0 L403.5,502.8Z" fill="#111"/><rect x="417.5" y="494.6" width="9.5" height="7.5" fill="none" stroke="#444444" stroke-width="1.2"/><rect x="416.9" y="494" width="10.7" height="1.9" fill="#444444"/><rect x="414.0" y="498.8" width="6" height="1.6" fill="#c0563f"/><path d="M421.3,499.6 L418.7,497.2 V502Z" fill="#c0563f"/><text x="418.1" y="509.6" font-family="Liberation Sans" font-weight="bold" font-size="6.5" fill="#c0563f" textLength="9.2" lengthAdjust="spacingAndGlyphs">XY</text><path d="M432.0,500 H437.0 L434.5,502.8Z" fill="#111"/><path d="M447,502.3 L446,508.3 L455,508.5 L460,504 L458.2,494.8 L447.2,496 Z" fill="none" stroke="#444444" stroke-width="1.2"/><g fill="#444444"><circle cx="447.2" cy="496" r="1.1"/><circle cx="458.2" cy="494.8" r="1.1"/><circle cx="460" cy="504" r="1.1"/><circle cx="455" cy="508.5" r="1.1"/><circle cx="446" cy="508.3" r="1.1"/></g><path d="M450.5,503.5 A3.5,3.5 0 1 1 456.5,502.5" fill="none" stroke="#3d9466" stroke-width="1.6"/><path d="M448.7,501.8 L451,505.5 L453,502" fill="#3d9466"/><path d="M463.2,500 H468.2 L465.7,502.8Z" fill="#111"/><path d="M477,495.5 V508.6 H489.5" fill="none" stroke="#444444" stroke-width="1"/><path d="M475.6,497 L477,494.6 L478.4,497Z M488,507.2 L490.4,508.6 L488,510Z" fill="#444444"/><rect x="476" y="507.6" width="2.2" height="2.2" fill="#444444"/><circle cx="483.7" cy="503" r="3.8" fill="#6fb78f"/><path d="M480,503 H487.4 M483.7,499.2 V506.8" stroke="#fff" stroke-width="0.5"/><text x="481" y="497.6" font-family="Liberation Sans" font-size="5.5" fill="#444444">x</text><text x="487.6" y="505" font-family="Liberation Sans" font-size="6" fill="#666">y</text><path d="M494.1,500 H499.1 L496.6,502.8Z" fill="#111"/><path fill="#444444" d="M512.1,494.2 H520 L524.5,498.6 V500.5 H523.1 V499.3 H519.2 V495.6 H513.5 V507.5 H517.5 V508.9 H512.1Z"/><path d="M520,494.2 L524.5,498.6 H520Z" fill="#444444"/><circle cx="521.5" cy="504.2" r="3.6" fill="none" stroke="#3d9466" stroke-width="1.6"/><path d="M524.2,507 L527.6,509.9" stroke="#3d9466" stroke-width="1.7"/><path d="M544.8,497.8 L553.5,506.3 M553.5,497.8 L544.8,506.3" stroke="#444444" stroke-width="2"/><rect x="585.5" y="494.6" width="14" height="14.8" fill="#f4f4f4" stroke="#444444" stroke-width="1.3"/><rect x="585" y="494" width="15" height="2.3" fill="#444444"/><path d="M592.5,496 V509.5" stroke="#444444" stroke-width="1.1"/><path d="M585.5,499.8 H599.5 M585.5,503.1 H599.5 M585.5,506.3 H599.5" stroke="#8a8a8a" stroke-width="1.1"/><g fill="none" stroke="#a3a3a3" stroke-width="1.2"><rect x="614.7" y="495.6" width="5.8" height="3.6"/><rect x="621.2" y="500.6" width="5.8" height="3.2"/><rect x="614.7" y="504.9" width="5.8" height="3.2"/></g><rect x="614.1" y="495" width="7" height="1.6" fill="#909090"/><path d="M626.5,504.3 V510.3 M623.5,507.3 H629.5" stroke="#6fb78f" stroke-width="1.1"/><g fill="none" stroke="#a3a3a3" stroke-width="1.2"><rect x="638.6" y="495.6" width="5.8" height="3.6"/><rect x="645.1" y="500.6" width="5.8" height="3.2"/><rect x="638.6" y="504.9" width="5.8" height="3.2"/></g><rect x="638" y="495" width="7" height="1.6" fill="#909090"/><path d="M650,494.2 V500.2 M647,497.2 H653" stroke="#6fb78f" stroke-width="1.1"/><g fill="none" stroke="#a3a3a3" stroke-width="1.2"><rect x="662.5" y="495.6" width="5.8" height="3.6"/><rect x="669.0" y="500.6" width="5.8" height="3.2"/><rect x="662.5" y="504.9" width="5.8" height="3.2"/></g><rect x="661.9" y="495" width="7" height="1.6" fill="#909090"/><path d="M672.5,494.5 L677,499 M677,494.5 L672.5,499" stroke="#dc9a8c" stroke-width="1.1"/><g fill="none" stroke="#a3a3a3" stroke-width="1.2"><rect x="691.7" y="495.6" width="5.8" height="3.6"/><rect x="691.7" y="504.9" width="5.8" height="3.2"/><path d="M697.5,500.5 H704"/></g><rect x="691.1" y="495" width="7" height="1.6" fill="#909090"/><path d="M699.8,501.5 H702.2 V505.5 H703.8 L701,509.8 L698.2,505.5 H699.8Z" fill="#8cc5a5"/><g fill="none" stroke="#a3a3a3" stroke-width="1.2"><rect x="716.5" y="495.6" width="5.8" height="3.6"/><rect x="716.5" y="504.9" width="5.8" height="3.2"/><path d="M722.3,503.2 H728.9"/></g><rect x="715.9" y="495" width="7" height="1.6" fill="#909090"/><path d="M724.6,502.5 H727 V498.3 H728.6 L725.8,494 L723,498.3 H724.6Z" fill="#8cc5a5"/><path d="M744.6,497.5 V494.6 H747.5 M757.3,494.6 H760.2 V497.5 M760.2,506.5 V509.4 H757.3 M747.5,509.4 H744.6 V506.5" fill="none" stroke="#444444" stroke-width="1.3"/><rect x="747.8" y="497.8" width="8.6" height="8.6" fill="none" stroke="#3d9466" stroke-width="1.5"/><path d="M211.5,526.5 V533.5 L215.7,530Z" fill="none" stroke="#c4c4c4" stroke-width="1"/><rect x="227" y="524" width="12" height="11.8" fill="none" stroke="#22703f" stroke-width="1.8"/><path d="M213.35,549.2 V555.8 M210,552.5 H216.7" stroke="#2aa060" stroke-width="1.2"/><rect x="222" y="544.9" width="12" height="11.9" fill="none" stroke="#22703f" stroke-width="1.8"/><path d="M1081,569 L1085.4,561.5 L1089.8,569Z" fill="#d4d4d4"/><path d="M1081,666 L1085.4,673.5 L1089.8,666Z" fill="#d4d4d4"/><g fill="#444444"><rect x="205.5" y="748.8" width="4" height="1.2"/><rect x="212" y="748.8" width="8" height="1.2"/><rect x="230" y="748.8" width="3.5" height="1.2"/><rect x="235.9" y="748.8" width="8" height="1.2"/><rect x="528.2" y="748.6" width="14.6" height="3.4"/></g><path d="M264.6,749.9 Q264.872,751.228 266.20000000000005,751.5 Q264.872,751.772 264.6,753.1 Q264.32800000000003,751.772 263.0,751.5 Q264.32800000000003,751.228 264.6,749.9Z" fill="#3d9466"/><rect x="285.5" y="750.5" width="3" height="1.5" fill="#444444"/><g fill="#a0a0a0"><rect x="557.5" y="749" width="7" height="1.4"/><rect x="581.4" y="749" width="7" height="1.4"/><rect x="605.3" y="749" width="7" height="1.4"/><rect x="638" y="749" width="7" height="1.4"/></g><path d="M615.5,748.5 L619.5,752.5 M619.5,748.5 L615.5,752.5" stroke="#dc9a8c" stroke-width="1.2"/><path d="M659.5,748 L656.5,752 H662.5Z" fill="#7fbf9a"/><path d="M687.6,752 V749.6 H690.5 M700.5,749.6 H703.4 V752" fill="none" stroke="#444444" stroke-width="1.3"/><rect x="252" y="748" width="1" height="4" fill="#b9c0ca"/><rect x="305" y="748" width="1" height="4" fill="#b9c0ca"/><rect x="551" y="748" width="1" height="4" fill="#b9c0ca"/><rect x="593" y="748" width="1" height="4" fill="#b9c0ca"/><rect x="628" y="748" width="1" height="4" fill="#b9c0ca"/><rect x="681" y="748" width="1" height="4" fill="#b9c0ca"/></svg>
</body></html>
